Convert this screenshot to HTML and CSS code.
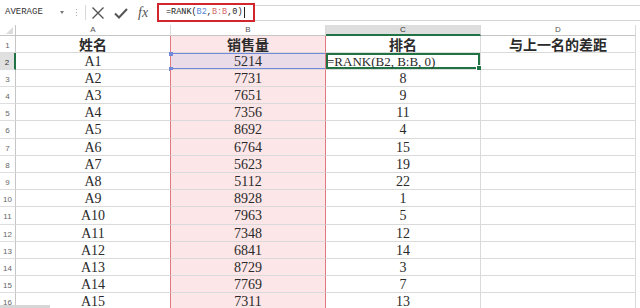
FILE: index.html
```html
<!DOCTYPE html>
<html lang="zh">
<head>
<meta charset="utf-8">
<link rel="stylesheet" href="styles.css">
</head>
<body>
<div class="bar">
  <div class="namebox">AVERAGE<span class="dd"></span></div>
  <div class="dots"><i></i><i></i><i></i></div>
  <div class="btns">
    <svg class="ic" width="16" height="14" viewBox="0 0 16 14"><path d="M2.5 1.5 L13.5 12.5 M13.5 1.5 L2.5 12.5" stroke="#555" stroke-width="1.4" fill="none"/></svg>
    <svg class="ic" width="16" height="14" viewBox="0 0 16 14"><path d="M2 7.5 L6 11.5 L14 3" stroke="#555" stroke-width="2" fill="none"/></svg>
    <span class="fx">fx</span>
  </div>
  <div class="fbox">=RANK(<span class="blue">B2</span>,<span class="red">B:B</span>,0)<span class="caret"></span></div>
  <div class="frest"></div>
</div>
<div class="sheet">
  <div class="row hdr"><div class="rh corner"><span class="tri"></span></div><div class="c">A</div><div class="c">B</div><div class="c sel">C</div><div class="c">D</div></div>
  <div class="row"><div class="rh">1</div><div class="c t">姓名</div><div class="c t pk">销售量</div><div class="c t">排名</div><div class="c t">与上一名的差距</div></div>
  <div class="row"><div class="rh selr">2</div><div class="c">A1</div><div class="c pk ref">5214</div><div class="c active">=RANK(B2, B:B, 0)</div><div class="c"></div></div>
  <div class="row"><div class="rh">3</div><div class="c">A2</div><div class="c pk">7731</div><div class="c">8</div><div class="c"></div></div>
  <div class="row"><div class="rh">4</div><div class="c">A3</div><div class="c pk">7651</div><div class="c">9</div><div class="c"></div></div>
  <div class="row"><div class="rh">5</div><div class="c">A4</div><div class="c pk">7356</div><div class="c">11</div><div class="c"></div></div>
  <div class="row"><div class="rh">6</div><div class="c">A5</div><div class="c pk">8692</div><div class="c">4</div><div class="c"></div></div>
  <div class="row"><div class="rh">7</div><div class="c">A6</div><div class="c pk">6764</div><div class="c">15</div><div class="c"></div></div>
  <div class="row"><div class="rh">8</div><div class="c">A7</div><div class="c pk">5623</div><div class="c">19</div><div class="c"></div></div>
  <div class="row"><div class="rh">9</div><div class="c">A8</div><div class="c pk">5112</div><div class="c">22</div><div class="c"></div></div>
  <div class="row"><div class="rh">10</div><div class="c">A9</div><div class="c pk">8928</div><div class="c">1</div><div class="c"></div></div>
  <div class="row"><div class="rh">11</div><div class="c">A10</div><div class="c pk">7963</div><div class="c">5</div><div class="c"></div></div>
  <div class="row"><div class="rh">12</div><div class="c">A11</div><div class="c pk">7348</div><div class="c">12</div><div class="c"></div></div>
  <div class="row"><div class="rh">13</div><div class="c">A12</div><div class="c pk">6841</div><div class="c">14</div><div class="c"></div></div>
  <div class="row"><div class="rh">14</div><div class="c">A13</div><div class="c pk">8729</div><div class="c">3</div><div class="c"></div></div>
  <div class="row"><div class="rh">15</div><div class="c">A14</div><div class="c pk">7769</div><div class="c">7</div><div class="c"></div></div>
  <div class="row"><div class="rh">16</div><div class="c">A15</div><div class="c pk">7311</div><div class="c">13</div><div class="c"></div></div>
  <div class="hscroll"></div>
</div>
</body>
</html>
```
FILE: styles.css
```css
* { box-sizing: border-box; }
html, body { margin: 0; padding: 0; background: #fff; }
body { width: 640px; height: 308px; overflow: hidden; font-family: "Liberation Serif", "Noto Sans CJK SC", serif; color: #2a2a2a; }

.bar { height: 25px; display: flex; align-items: center; }
.namebox { margin-left: 2px; width: 64px; height: 15px; position: relative; font: 9px/15px "Liberation Mono", monospace; color: #333; padding-left: 3px; }
.dd { position: absolute; left: 58px; top: 6px; border-left: 2.5px solid transparent; border-right: 2.5px solid transparent; border-top: 3px solid #777; }
.dots { margin-left: 10px; width: 2px; display: flex; flex-direction: column; gap: 2px; }
.dots i { display: block; width: 1px; height: 1px; background: #aaa; }
.btns { margin-left: 7px; height: 15px; border-left: 1px solid #d8d8d8; display: flex; align-items: center; padding-left: 4px; gap: 7px; width: 72px; }
.fx { font: italic 14px/15px "Liberation Serif", serif; color: #555; margin-left: 2px; }
.fbox { width: 98px; height: 19px; border: 2px solid #d2262e; font: 8.5px/15px "Liberation Mono", monospace; color: #222; padding-left: 7px; display: flex; align-items: center; }
.blue { color: #5b86d6; }
.red { color: #d66b6b; }
.caret { display: inline-block; width: 1px; height: 11px; background: #222; margin-left: 1px; }
.frest { flex: 1; height: 16px; border-top: 1px solid #d5d5d5; border-bottom: 1px solid #d5d5d5; }

.sheet { position: relative; }
.row { display: flex; height: 17.2px; }
.row.hdr { height: 10.5px; }
.rh { width: 16px; flex: none; border-right: 1px solid #c6c6c6; border-bottom: 1px solid #dedede; font: 8px/19px "Liberation Sans", sans-serif; color: #666; text-align: center; }
.c { width: 155px; flex: none; border-right: 1px solid #dadada; border-bottom: 1px solid #dadada; font-size: 14px; line-height: 18px; text-align: center; white-space: nowrap; position: relative; }
.hdr .c { font: 8px/10px "Liberation Sans", sans-serif; color: #555; border-bottom-color: #c6c6c6; }
.hdr .rh { position: relative; border-bottom-color: #c6c6c6; }
.tri { position: absolute; right: 2px; bottom: 1px; border-left: 7px solid transparent; border-bottom: 7px solid #dcdcdc; }
.hdr .c.sel { background: #dedede; border-bottom: 2px solid #217346; color: #333; }
.c.t { font-weight: bold; line-height: 19px; }
.selr { background: #e0e0e0; border-right: 2px solid #217346; color: #333; }
.row:not(.hdr) .c:nth-child(2) { border-right: 1.5px solid #e07a80; }
.c.pk { background: #fce6e7; border-right: 1.5px solid #e07a80; }
.c.ref { background: #e9dbe8; box-shadow: inset 0 1px 0 #7188d8, inset 0 -1px 0 #7188d8; }
.c.ref::before, .c.ref::after { content: ""; position: absolute; left: -2px; width: 4px; height: 4px; background: #7188d8; }
.c.ref::before { top: -1px; }
.c.ref::after { bottom: -2px; }
.c.active { text-align: left; padding-left: 1px; font-size: 13px; box-shadow: inset 0 0 0 2px #217346; }
.c.active::after { content: ""; position: absolute; right: -2px; bottom: -2px; width: 4px; height: 4px; background: #217346; border: 1px solid #fff; }
.hscroll { position: absolute; left: 0; top: 280px; width: 50px; height: 3px; background: #d6d6d6; }
```
